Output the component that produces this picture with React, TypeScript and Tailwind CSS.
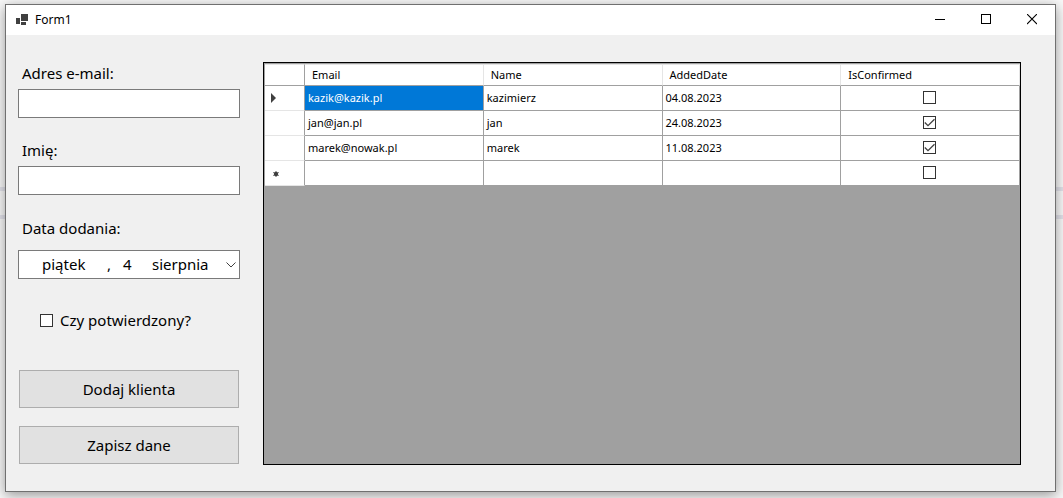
import { useState } from "react";

type Client = {
  email: string;
  name: string;
  addedDate: string;
  isConfirmed: boolean;
};

const CLIENTS: Client[] = [
  { email: "kazik@kazik.pl", name: "kazimierz", addedDate: "04.08.2023", isConfirmed: false },
  { email: "jan@jan.pl", name: "jan", addedDate: "24.08.2023", isConfirmed: true },
  { email: "marek@nowak.pl", name: "marek", addedDate: "11.08.2023", isConfirmed: true },
];

const COLUMNS = ["Email", "Name", "AddedDate", "IsConfirmed"];

function CheckBox({
  id,
  label,
  defaultChecked = false,
}: {
  id?: string;
  label?: string;
  defaultChecked?: boolean;
}) {
  return (
    <span className="relative block h-[13px] w-[13px] flex-shrink-0">
      <input
        id={id}
        type="checkbox"
        aria-label={label}
        defaultChecked={defaultChecked}
        className="peer block h-[13px] w-[13px] appearance-none border border-[#333333] bg-white"
      />
      <svg
        viewBox="0 0 13 13"
        className="pointer-events-none absolute inset-0 hidden h-[13px] w-[13px] peer-checked:block"
        aria-hidden
      >
        <path d="M1.8 6.5 L5 9.7 L11.5 3.2" fill="none" stroke="#404040" strokeWidth="1.3" />
      </svg>
    </span>
  );
}

function TitleBar() {
  return (
    <header className="flex h-[30px] items-center justify-between bg-white">
      <div className="flex items-center gap-[7px] pl-[10px]">
        <svg width="12" height="13" viewBox="0 0 12 13" fill="#404040" shapeRendering="crispEdges" aria-hidden>
          <rect x="5" y="0" width="7" height="7" />
          <rect x="0" y="4" width="4" height="6" />
          <rect x="5" y="8" width="5" height="3" />
        </svg>
        <h1 className="text-[12px] leading-4">Form1</h1>
      </div>
      <div className="flex h-full">
        <button aria-label="Minimize" className="flex w-[46px] items-center justify-center">
          <svg width="10" height="10" viewBox="0 0 10 10" shapeRendering="crispEdges" aria-hidden>
            <path d="M0 4.5H10" stroke="#000" />
          </svg>
        </button>
        <button aria-label="Maximize" className="flex w-[46px] items-center justify-center">
          <svg width="10" height="12" viewBox="0 0 10 12" shapeRendering="crispEdges" aria-hidden>
            <rect x="0.5" y="0.5" width="9" height="9" fill="none" stroke="#000" />
          </svg>
        </button>
        <button aria-label="Close" className="flex w-[46px] items-center justify-center">
          <svg width="10" height="12" viewBox="0 0 10 12" aria-hidden>
            <path d="M0 0L10 10M10 0L0 10" stroke="#000" strokeWidth="1.1" />
          </svg>
        </button>
      </div>
    </header>
  );
}

function TextField({ id, label }: { id: string; label: string }) {
  return (
    <div>
      <label htmlFor={id} className="block pb-[5px] pl-1 leading-[22px]">
        {label}
      </label>
      <input
        id={id}
        type="text"
        className="block h-[29px] w-full border border-[#7a7a7a] bg-white px-1 outline-none"
      />
    </div>
  );
}

function ClientForm() {
  return (
    <form className="w-[222px] flex-shrink-0 text-[15px]" onSubmit={(e) => e.preventDefault()}>
      <div className="space-y-[21px]">
        <TextField id="email" label="Adres e-mail:" />
        <TextField id="name" label="Imię:" />
      </div>

      <label htmlFor="added-date" className="mt-[22px] block pb-[11px] pl-1 leading-[22px]">
        Data dodania:
      </label>
      <button
        id="added-date"
        type="button"
        aria-haspopup="dialog"
        className="flex h-[29px] w-full items-center border border-[#7a7a7a] bg-white pl-[23px] text-left"
      >
        <span className="w-[65px]">piątek</span>
        <span className="w-4">,</span>
        <span className="w-[29px]">4</span>
        <span>sierpnia</span>
        <svg width="10" height="6" viewBox="0 0 10 6" className="mr-[3px] ml-auto" aria-hidden>
          <path d="M0.5 0.5L5 5L9.5 0.5" fill="none" stroke="#404040" />
        </svg>
      </button>

      <div className="mt-[30px] flex items-center gap-[7px] pl-[22px]">
        <CheckBox id="confirmed" />
        <label htmlFor="confirmed" className="leading-[22px]">
          Czy potwierdzony?
        </label>
      </div>

      <div className="mt-[39px] flex flex-col gap-[18px] px-px">
        <button type="button" className="h-[38px] border border-[#adadad] bg-[#e1e1e1]">
          Dodaj klienta
        </button>
        <button type="button" className="h-[38px] border border-[#adadad] bg-[#e1e1e1]">
          Zapisz dane
        </button>
      </div>
    </form>
  );
}

function ClientTable() {
  const [selectedRow, setSelectedRow] = useState(0);
  const cell = "border-r border-b border-[#a0a0a0] px-[3px]";
  const rowHeader = "border-r border-b border-r-[#a0a0a0] border-b-[#e5e5e5] pl-[6px]";

  return (
    <div className="min-w-0 flex-1 border border-black bg-[#a0a0a0] pt-px pl-px">
      <table className="w-full table-fixed border-separate border-spacing-0 bg-white text-[11px] leading-4">
        <thead>
          <tr className="h-[22px] text-left">
            <th className="w-10 border-t border-r border-b border-[#a0a0a0] border-t-[#e5e5e5]" aria-label="Row" />
            {COLUMNS.map((column) => (
              <th
                key={column}
                scope="col"
                className="border-t border-r border-b border-t-[#e5e5e5] border-r-[#e5e5e5] border-b-[#a0a0a0] px-[7px] font-normal"
              >
                {column}
              </th>
            ))}
          </tr>
        </thead>
        <tbody>
          {CLIENTS.map((client, i) => (
            <tr key={client.email} className="h-[25px]" onClick={() => setSelectedRow(i)}>
              <th scope="row" className={rowHeader} aria-label={client.email}>
                {i === selectedRow && (
                  <svg width="5" height="10" viewBox="0 0 5 10" aria-hidden>
                    <path d="M0 0L5 5L0 10Z" fill="#404040" />
                  </svg>
                )}
              </th>
              <td className={i === selectedRow ? `${cell} bg-[#0078d7] text-white` : cell}>
                {client.email}
              </td>
              <td className={cell}>{client.name}</td>
              <td className={cell}>{client.addedDate}</td>
              <td className={cell}>
                <div className="flex justify-center pr-[2px] pb-[2px]">
                  <CheckBox label={`${client.name} confirmed`} defaultChecked={client.isConfirmed} />
                </div>
              </td>
            </tr>
          ))}
          {/* placeholder row for a new record */}
          <tr className="h-[25px]">
            <th className={rowHeader} aria-label="New row">
              <svg width="10" height="8" viewBox="0 0 10 8" aria-hidden>
                <circle cx="5" cy="5" r="2.2" fill="#404040" />
                <path d="M5 2V8M2.2 3.4L7.8 6.6M2.2 6.6L7.8 3.4" stroke="#404040" strokeWidth="0.8" />
              </svg>
            </th>
            <td className={cell} />
            <td className={cell} />
            <td className={cell} />
            <td className={cell}>
              <div className="flex justify-center pr-[2px] pb-[2px]">
                <CheckBox label="New client confirmed" />
              </div>
            </td>
          </tr>
        </tbody>
      </table>
    </div>
  );
}

export default function App() {
  return (
    <div className="relative isolate flex min-h-screen flex-col bg-[#f8f8f8] pt-1 pr-[7px] pb-[6px] pl-[5px] font-['Noto_Sans','Open_Sans',sans-serif] text-black">
      {/* ruled lines of the page behind the window */}
      <div
        className="absolute inset-x-0 top-[187px] -z-10 h-8 border-y-4 border-[#e2e2ea]"
        aria-hidden
      />
      <main className="flex flex-1 flex-col border border-[#707070] bg-[#f0f0f0] shadow-[0_3px_12px_rgba(0,0,0,0.4)]">
        <TitleBar />
        <div className="flex flex-1 gap-[23px] pt-[27px] pr-[34px] pb-[26px] pl-3">
          <ClientForm />
          <ClientTable />
        </div>
      </main>
    </div>
  );
}
